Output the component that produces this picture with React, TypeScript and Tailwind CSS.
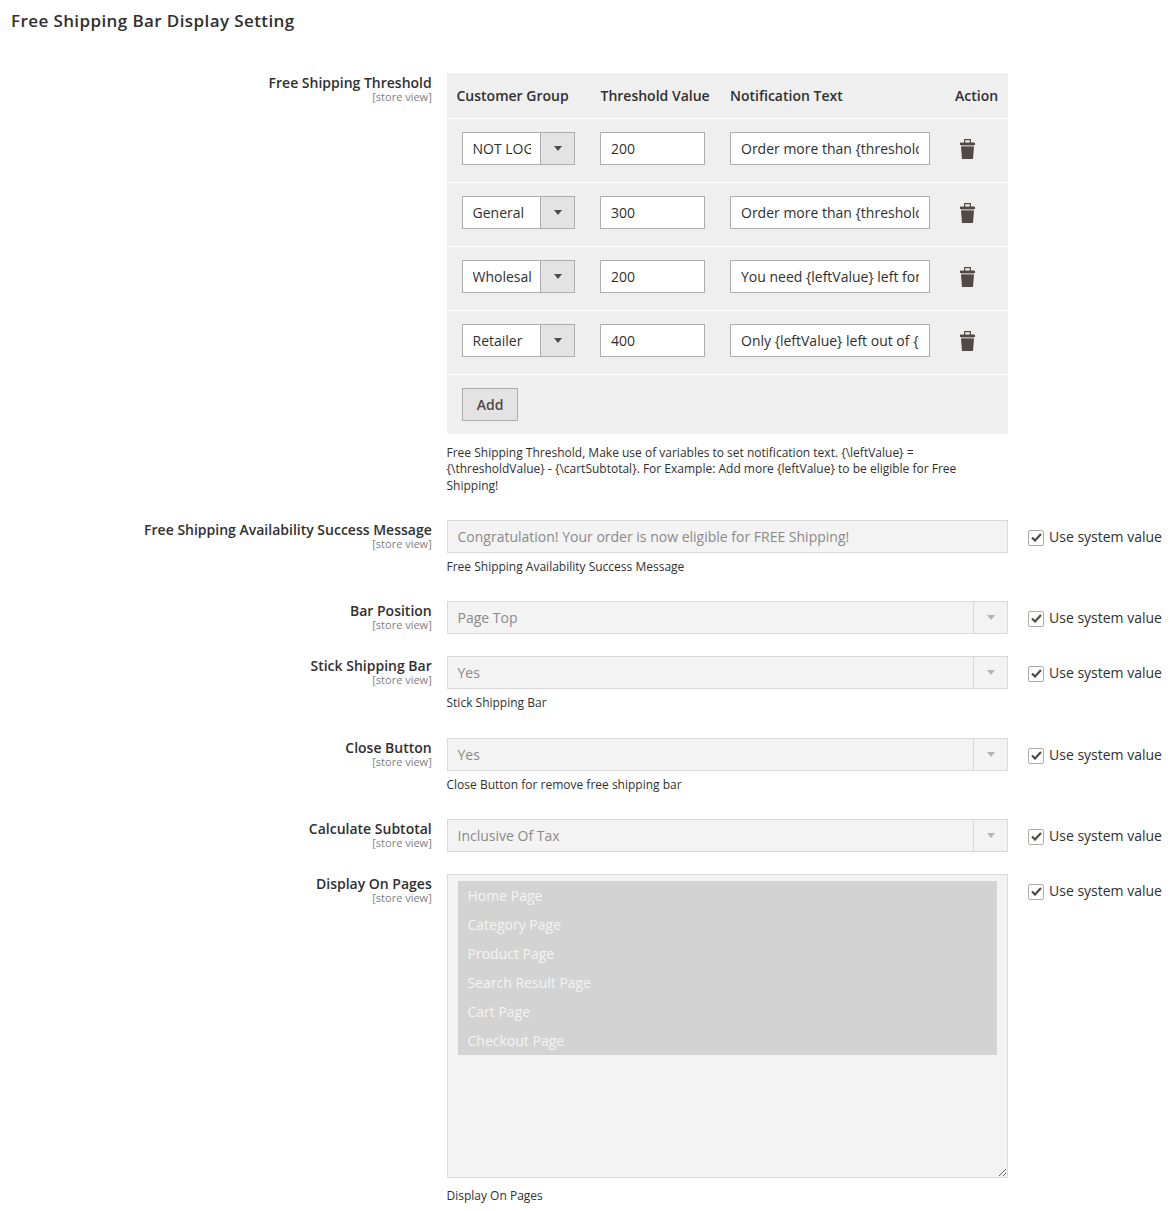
import type { ReactNode } from "react";

const THRESHOLDS = [
  { group: "NOT LOGGED IN", value: "200", text: "Order more than {thresholdValue} for free shipping" },
  { group: "General", value: "300", text: "Order more than {thresholdValue} for free shipping" },
  { group: "Wholesale", value: "200", text: "You need {leftValue} left for free shipping" },
  { group: "Retailer", value: "400", text: "Only {leftValue} left out of {thresholdValue}" },
];

const PAGES = ["Home Page", "Category Page", "Product Page", "Search Result Page", "Cart Page", "Checkout Page"];

const Arrow = ({ className }: { className: string }) => (
  <svg width="8" height="5" viewBox="0 0 8 5" className={className}>
    <path d="M0 0h8L4 5z" fill="currentColor" />
  </svg>
);

const TrashIcon = () => (
  <svg width="15" height="20" viewBox="0 0 15 20" className="text-[#514943]">
    <path d="M4 4V.6C4 .3 4.300 0 4.600 0h5.800c.3 0 .6.3.6.6V4H9.800V1.200H5.200V4z" fill="currentColor" />
    <rect x="0" y="3.500" width="15" height="2.500" rx="0.500" fill="currentColor" />
    <rect x="1" y="6" width="13" height="1.500" fill="#a9a7a5" />
    <path d="M1 7.500h13L13 20H2z" fill="currentColor" />
  </svg>
);

const SystemValue = () => (
  <label className="ml-5 flex h-[35px] items-center text-sm text-[#303030]">
    <span className="mt-px flex h-4 w-4 items-center justify-center rounded-[2px] border border-[#adadad] bg-white">
      <svg width="11" height="9" viewBox="0 0 11 9">
        <path d="M1 4.500l3 3 6-6.500" fill="none" stroke="#514943" strokeWidth="2.200" />
      </svg>
    </span>
    <span className="ml-[5px] whitespace-nowrap">Use system value</span>
  </label>
);

const DisabledSelect = ({ value }: { value: string }) => (
  <div className="flex h-[33px] items-stretch border border-[#d9d9d9] bg-[#f3f3f3] text-sm text-[#8a8a8a]">
    <span className="flex flex-1 items-center pt-[2px] pl-[9.500px]">{value}</span>
    <span className="flex w-[34px] items-center justify-center border-l border-[#d9d9d9]">
      <Arrow className="text-[#b5b5b5]" />
    </span>
  </div>
);

type RowProps = {
  label: string;
  note?: ReactNode;
  system?: boolean;
  className: string;
  children: ReactNode;
};

const Row = ({ label, note, system = true, className, children }: RowProps) => (
  <div className={`flex items-start ${className}`}>
    <div className="w-[431.750px] shrink-0 text-right">
      <div className="text-sm leading-[19px] font-semibold text-[#303030]">{label}</div>
      <div className="text-[11px] leading-[9px] text-[#808080]">[store view]</div>
    </div>
    <div className="ml-[15.250px] w-[561px] shrink-0">
      {children}
      {note ? <p className="mt-[5px] -ml-[0.500px] text-xs leading-[17px] text-[#303030]">{note}</p> : null}
    </div>
    {system ? <SystemValue /> : null}
  </div>
);

export default function App() {
  return (
    <div className="h-[1211px] overflow-hidden bg-white font-['Open_Sans',sans-serif] text-[#303030]">
      <h2 className="pt-[9px] pl-[11px] text-[17px] leading-[24px] font-semibold tracking-[0.4px] text-[#303030]">
        Free Shipping Bar Display Setting
      </h2>

      <div className="pt-[40px]">
        <Row label="Free Shipping Threshold" system={false} className="mb-[25.500px]">
          <div className="bg-[#efefef] text-sm">
            <div className="flex h-[46px] items-center border-b border-white font-semibold">
              <span className="w-[153.500px] pl-[9.500px]">Customer Group</span>
              <span className="w-[129.500px]">Threshold Value</span>
              <span className="w-[225px]">Notification Text</span>
              <span>Action</span>
            </div>
            {THRESHOLDS.map((row) => (
              <div key={row.group} className="flex h-[64px] items-center border-b border-white pb-[4px]">
                <div className="ml-[15px] flex h-[33px] w-[113px] border border-[#adadad] bg-white">
                  <input
                    readOnly
                    value={row.group}
                    className="w-[77px] bg-white pt-[1px] pr-[9.500px] pl-[9.500px] text-sm text-[#303030] outline-none"
                  />
                  <span className="flex flex-1 items-center justify-center border-l border-[#adadad] bg-[#e3e3e3]">
                    <Arrow className="text-[#514943]" />
                  </span>
                </div>
                <input
                  readOnly
                  value={row.value}
                  className="ml-[25px] h-[33px] w-[105px] border border-[#adadad] bg-white px-[10px] text-sm text-[#303030] outline-none"
                />
                <input
                  readOnly
                  value={row.text}
                  className="ml-[25px] h-[33px] w-[200px] border border-[#adadad] bg-white px-[10px] text-sm text-[#303030] outline-none"
                />
                <span className="ml-[30px] flex pt-[1px]">
                  <TrashIcon />
                </span>
              </div>
            ))}
            <div className="flex h-[59px] items-start pt-[13px] pl-[15px]">
              <button
                type="button"
                className="h-[33px] w-[56px] border border-[#adadad] bg-[#e3e3e3] text-sm font-semibold text-[#514943]"
              >
                Add
              </button>
            </div>
          </div>
          <p className="mt-[10.500px] -ml-[0.500px] text-xs leading-[16.500px] text-[#303030]">
            Free Shipping Threshold, Make use of variables to set notification text. {"{\\leftValue}"} =
            <br />
            {"{\\thresholdValue} - {\\cartSubtotal}. For Example: Add more {leftValue} to be eligible for Free"}
            <br />
            Shipping!
          </p>
        </Row>

        <Row
          label="Free Shipping Availability Success Message"
          note="Free Shipping Availability Success Message"
          className="mb-[26px]"
        >
          <div className="flex h-[33px] items-center border border-[#d9d9d9] bg-[#f3f3f3] pt-[2px] pl-[9.500px] text-sm text-[#8a8a8a]">
            Congratulation! Your order is now eligible for FREE Shipping!
          </div>
        </Row>

        <Row label="Bar Position" className="mb-[20px]">
          <DisabledSelect value="Page Top" />
        </Row>

        <Row label="Stick Shipping Bar" note="Stick Shipping Bar" className="mb-[27px]">
          <DisabledSelect value="Yes" />
        </Row>

        <Row label="Close Button" note="Close Button for remove free shipping bar" className="mb-[26px]">
          <DisabledSelect value="Yes" />
        </Row>

        <Row label="Calculate Subtotal" className="mb-[20px]">
          <DisabledSelect value="Inclusive Of Tax" />
        </Row>

        <Row label="Display On Pages" className="">
          <div className="h-[304px] resize-y overflow-auto border border-[#d9d9d9] bg-[#f3f3f3] pt-[6px] pr-[10px] pl-[10px]">
            <ul className="bg-[#d3d3d3] text-sm text-[#f3f3f3]">
              {PAGES.map((page) => (
                <li key={page} className="flex h-[29px] items-center pt-[2px] pl-[9.500px]">
                  {page}
                </li>
              ))}
            </ul>
          </div>
          <p className="mt-[9px] -ml-[0.500px] text-xs leading-[17px] text-[#303030]">Display On Pages</p>
        </Row>
      </div>
    </div>
  );
}
